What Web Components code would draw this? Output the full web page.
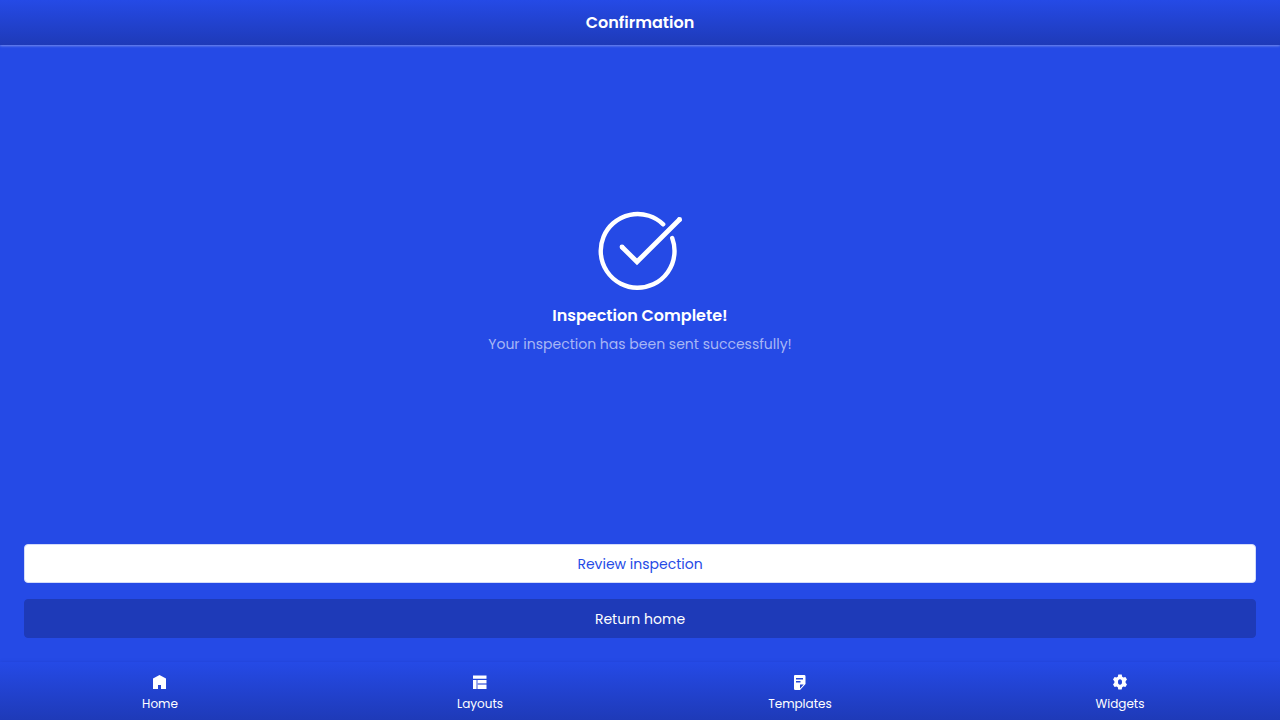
<!DOCTYPE html>
<html lang="en">
<head>
<meta charset="utf-8">
<meta name="viewport" content="width=device-width, initial-scale=1">
<title>Confirmation</title>
<style>
  html, body { margin: 0; }
  body { font-family: Poppins, Inter, sans-serif; color: #fff; --blue: #254ae6; --navy: #1e3ab8; background: var(--blue); }
</style>
</head>
<body>
<inspection-screen>
  <app-header slot="header">Confirmation</app-header>
  <status-message>
    <span slot="title">Inspection Complete!</span>
    <span slot="detail">Your inspection has been sent successfully!</span>
  </status-message>
  <action-button slot="actions" variant="light">Review inspection</action-button>
  <action-button slot="actions">Return home</action-button>
  <tab-bar slot="footer">
    <tab-item icon="home">Home</tab-item>
    <tab-item icon="layouts">Layouts</tab-item>
    <tab-item icon="templates">Templates</tab-item>
    <tab-item icon="widgets">Widgets</tab-item>
  </tab-bar>
</inspection-screen>
<script>
const define = (name, render) => customElements.define(name, class extends HTMLElement {
  constructor() {
    super();
    this.attachShadow({ mode: 'open' }).innerHTML = render(this);
  }
});

define('inspection-screen', () => `
  <style>
    :host { display: flex; flex-direction: column; min-height: 100vh; }
    main { flex: 1; display: flex; flex-direction: column; }
    .message { flex: 1; display: flex; align-items: center; justify-content: center; padding-bottom: 10px; }
    .actions { display: flex; flex-direction: column; gap: 16px; padding: 24px; }
  </style>
  <slot name="header"></slot>
  <main>
    <div class="message"><slot></slot></div>
    <div class="actions"><slot name="actions"></slot></div>
  </main>
  <slot name="footer"></slot>`);

define('app-header', () => `
  <style>
    :host { display: block; background: linear-gradient(var(--blue), var(--navy)); box-shadow: 0 1px 3px rgba(255,255,255,.2), 0 1px 2px rgba(255,255,255,.2); }
    h1 { margin: 0; padding: 11px 16px 10px; font-size: 16px; line-height: 24px; font-weight: 600; text-align: center; }
  </style>
  <header><h1><slot></slot></h1></header>`);

define('status-message', () => `
  <style>
    :host { display: flex; flex-direction: column; align-items: center; padding: 0 24px; text-align: center; }
    svg { width: 100px; height: 100px; }
    h2 { margin: 4px 0 6px; font-size: 16px; line-height: 24px; font-weight: 600; }
    p { margin: 0; padding-bottom: 2px; font-size: 14px; line-height: 20px; color: #a8b7f5; }
  </style>
  <svg viewBox="0 0 100 100" fill="none" stroke="#fff" stroke-width="4.4" aria-hidden="true">
    <path d="M73.2 24.3A36.9 36.9 0 1 0 82.2 38" stroke-linecap="round"/>
    <path d="M32 47 47 61.8 90.3 18.8" stroke-width="4.800"/>
    <circle cx="32" cy="47" r="2.4" fill="#fff" stroke="none"/>
    <circle cx="89.600" cy="19.500" r="2.400" fill="#fff" stroke="none"/>
  </svg>
  <h2><slot name="title"></slot></h2>
  <p><slot name="detail"></slot></p>`);

define('action-button', () => `
  <style>
    :host { display: block; }
    button { display: block; box-sizing: border-box; width: 100%; padding: 9px 16px 7px; border: 1px solid var(--navy); border-radius: 4px; background: var(--navy); color: #fff; font: inherit; font-size: 14px; line-height: 21px; cursor: pointer; }
    :host([variant="light"]) button { background: #fff; border-color: #d3dbfa; color: var(--blue); }
  </style>
  <button type="button"><slot></slot></button>`);

define('tab-bar', () => `
  <style>
    :host { display: block; background: linear-gradient(var(--blue), var(--navy)); box-shadow: 0 0 3px rgba(30,58,184,.4); }
    nav { display: grid; grid-template-columns: repeat(4, 1fr); }
  </style>
  <nav aria-label="Main"><slot></slot></nav>`);

const icons = {
  home: '<path fill="#fff" d="M1 4.600 7.500 1 14 4.600V15H9v-4H6v4H1z"/>',
  layouts: '<path fill="#fff" d="M1 1.400h13.500v3.400H1zM1 6h3.400v9H1zM5.600 6H14.500v3H5.600zM5.600 11H14.500v4H5.600z"/><path fill="#fff" opacity=".45" d="M5.600 9H14.500v2H5.600zM4.400 6h1.200v9H4.400z"/>',
  templates: '<path fill="#fff" fill-rule="evenodd" d="M3 1h9.200A1.300 1.300 0 0 1 13.500 2.300V10L8 16H3.200A1.200 1.200 0 0 1 2 14.800V2A1 1 0 0 1 3 1zM4 4v1.400h7V4zM4 7v1.400h4.500V7zM8 10.500v3.900l3.700-3.900z"/>',
  widgets: '<path fill="#fff" fill-rule="evenodd" d="M6.300 .5h3.400l.5 2.300 1.200.7 2-.6L15 5.600l-1.400 1.700v1.400L15 10.400l-1.600 2.700-2-.6-1.200.7-.5 2.300H6.300l-.5-2.300-1.200-.7-2 .6L1 10.400l1.400-1.700V7.300L1 5.600l1.600-2.700 2 .6 1.200-.7zM8 5.200a2 2.800 0 1 0 0 5.600 2 2.800 0 0 0 0-5.600z"/>'
};

define('tab-item', el => `
  <style>
    :host { display: block; }
    a { display: flex; flex-direction: column; align-items: center; gap: 4px; padding: 12px 0 6px; color: #fff; text-decoration: none; font-size: 12px; line-height: 20px; }
    svg { width: 16px; height: 16px; }
  </style>
  <a href="#${el.getAttribute('icon')}">
    <svg viewBox="0 0 16 16" aria-hidden="true">${icons[el.getAttribute('icon')]}</svg>
    <span><slot></slot></span>
  </a>`);
</script>
</body>
</html>
